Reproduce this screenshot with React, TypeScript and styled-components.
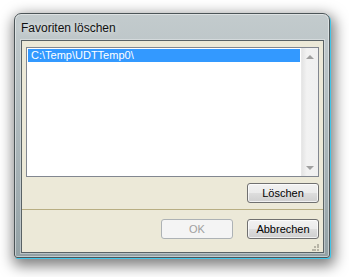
import React from 'react';
import styled, { createGlobalStyle } from 'styled-components';

const GlobalStyle = createGlobalStyle`
  html, body {
    margin: 0;
    padding: 0;
    background: #ffffff;
  }
  body {
    font-family: "Liberation Sans", Arial, sans-serif;
    font-size: 11px;
  }
`;

const Page = styled.div`
  width: 349px;
  height: 277px;
  padding: 13px 0 0 14px;
  box-sizing: border-box;
`;

const Window = styled.div`
  position: relative;
  width: 316px;
  height: 245px;
  box-sizing: border-box;
  border: 1px solid #4c5558;
  border-radius: 7px 7px 3px 3px;
  background: linear-gradient(180deg, #c3cbcd 0%, #b6c0c3 30%, #a3afb3 70%, #93a1a5 100%);
  box-shadow:
    1px 1px 0 #3fc6ea,
    inset 0 0 0 1px rgba(255, 255, 255, 0.45),
    2px 5px 14px 3px rgba(0, 0, 0, 0.5);
  display: flex;
  flex-direction: column;
  padding: 0 5px 4px 6px;
`;

const TitleBar = styled.div`
  height: 25px;
  display: flex;
  align-items: center;
  padding-top: 1px;
  font-family: "Liberation Sans", Arial, sans-serif;
  font-size: 12px;
  color: #111111;
  text-shadow: 0 0 6px rgba(255, 255, 255, 0.9);
`;

const Client = styled.div`
  position: relative;
  flex: 1;
  background: #ece9d8;
  border: 1px solid #596265;
  box-shadow: 0 0 0 1px rgba(255, 255, 255, 0.35);
  display: flex;
  flex-direction: column;
`;

const TopSection = styled.div`
  display: flex;
  flex-direction: column;
  padding: 6px 4px 0 4px;
`;

const ListBox = styled.div`
  height: 130px;
  box-sizing: border-box;
  border: 1px solid #828790;
  background: #ffffff;
  display: flex;
`;

const Items = styled.div`
  flex: 1;
  padding: 1px 1px 0 1px;
`;

const Item = styled.div<{ $selected?: boolean }>`
  height: 13px;
  line-height: 13px;
  padding-left: 3px;
  font-size: 11px;
  color: ${(p) => (p.$selected ? '#ffffff' : '#000000')};
  background: ${(p) => (p.$selected ? '#3399ff' : 'transparent')};
  white-space: nowrap;
`;

const ScrollBar = styled.div`
  width: 17px;
  background: linear-gradient(90deg, #e4e4e4 0%, #f2f2f2 30%, #f0f0f0 100%);
  border-left: 1px solid #e8e8e8;
  display: flex;
  flex-direction: column;
  justify-content: space-between;
  align-items: center;
  padding: 7px 0 6px;
  box-sizing: border-box;
`;

const Arrow = styled.div<{ $down?: boolean }>`
  width: 0;
  height: 0;
  border-left: 4px solid transparent;
  border-right: 4px solid transparent;
  ${(p) =>
    p.$down
      ? 'border-top: 4px solid #a0a0a0;'
      : 'border-bottom: 4px solid #a0a0a0;'}
`;

const ButtonRow = styled.div<{ $top: number }>`
  display: flex;
  justify-content: flex-end;
  gap: 14px;
  margin-top: ${(p) => p.$top}px;
`;

const Button = styled.button`
  width: 72px;
  height: 20px;
  box-sizing: border-box;
  padding: 0;
  border: 1px solid #707070;
  border-radius: 3px;
  background: linear-gradient(180deg, #f2f2f2 0%, #ebebeb 48%, #dddddd 52%, #cfcfcf 100%);
  box-shadow: inset 0 0 0 1px rgba(255, 255, 255, 0.7);
  font-family: "Liberation Sans", Arial, sans-serif;
  font-size: 11px;
  color: #000000;

  &:disabled {
    border-color: #adb2b5;
    background: #f4f4f4;
    box-shadow: none;
    color: #a0a0a0;
  }
`;

const Separator = styled.div`
  margin-top: 6px;
  border-top: 1px solid #b8ae82;
  padding: 0 4px;
  display: flex;
  flex-direction: column;
`;

const Grip = styled.svg`
  position: absolute;
  right: 4px;
  bottom: 1px;
`;

const App: React.FC = () => {
  return (
    <Page>
      <GlobalStyle />
      <Window>
        <TitleBar>Favoriten löschen</TitleBar>
        <Client>
          <TopSection>
            <ListBox>
              <Items>
                <Item $selected>C:\Temp\UDTTemp0\</Item>
              </Items>
              <ScrollBar>
                <Arrow />
                <Arrow $down />
              </ScrollBar>
            </ListBox>
            <ButtonRow $top={6}>
              <Button>Löschen</Button>
            </ButtonRow>
          </TopSection>
          <Separator>
            <ButtonRow $top={9}>
              <Button disabled>OK</Button>
              <Button>Abbrechen</Button>
            </ButtonRow>
          </Separator>
          <Grip width="7" height="7" viewBox="0 0 7 7">
            <rect x="5" y="0" width="2" height="2" fill="#b7b4a6" />
            <rect x="2" y="2" width="2" height="2" fill="#b7b4a6" />
            <rect x="5" y="2" width="2" height="2" fill="#b7b4a6" />
            <rect x="0" y="5" width="2" height="2" fill="#b7b4a6" />
            <rect x="2" y="5" width="2" height="2" fill="#b7b4a6" />
            <rect x="5" y="5" width="2" height="2" fill="#b7b4a6" />
          </Grip>
        </Client>
      </Window>
    </Page>
  );
};

export default App;
